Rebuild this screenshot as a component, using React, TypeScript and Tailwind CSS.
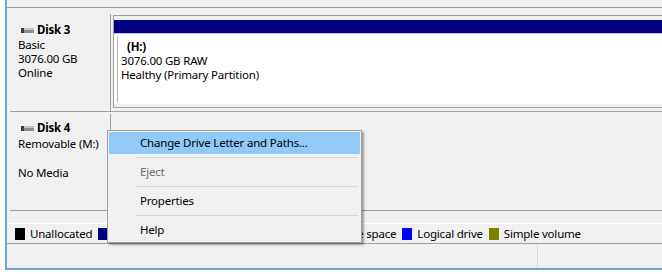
import React from "react";

function DiskIcon() {
  return (
    <svg width="13" height="5" viewBox="0 0 13 5" className="shrink-0">
      <rect x="0" y="0" width="13" height="5" fill="#8c8c8c" />
      <rect x="0" y="0" width="13" height="2" fill="#c4c4c4" />
      <rect x="0" y="0" width="3" height="5" fill="#3c3c3c" />
    </svg>
  );
}

const legend = [
  { label: "Unallocated", color: "bg-black" },
  { label: "Primary partition", color: "bg-[#000080]" },
  { label: "Extended partition", color: "bg-[#008000]" },
  { label: "Free space", color: "bg-[#80ff80]" },
  { label: "Logical drive", color: "bg-[#0000ff]" },
  { label: "Simple volume", color: "bg-[#808000]" },
];

function MenuSeparator() {
  return (
    <div className="h-[7px] flex items-center pl-[26px] pr-[2px]">
      <div className="h-px w-full bg-[#d7d7d7]" />
    </div>
  );
}

export default function App() {
  return (
    <div className="relative w-[662px] h-[274px] overflow-hidden bg-white text-[11.5px] leading-[14px] tracking-[-0.2px] text-black font-['Noto_Sans',sans-serif]">
      <div className="ml-[5px] w-[657px] h-[270px] border-l-2 border-b-2 border-[#6fa5d9] bg-[#f0f0f0] flex flex-col">
        {/* top pane edge */}
        <div className="h-[7px]" />
        <div className="h-px bg-[#a0a0a0]" />

        {/* disk list */}
        <div className="h-[215px] pl-[3px] pt-[6px] flex flex-col">
          {/* Disk 3 */}
          <div className="h-[98px] flex border-b border-[#a0a0a0]">
            <div className="w-[101px] border-r border-[#a0a0a0] pl-[8px] pt-[9px]">
              <div className="flex items-center gap-[3px] pl-[3px] font-bold">
                <DiskIcon />
                <span>Disk 3</span>
              </div>
              <div className="mt-px">Basic</div>
              <div>3076.00 GB</div>
              <div>Online</div>
            </div>
            <div className="ml-[2px] mt-px h-[93px] flex-1 flex flex-col border-t border-l border-b border-[#a0a0a0]">
              <div className="h-[4px]" />
              <div className="h-[13px] bg-[#000080]" />
              <div className="h-px bg-[#b8c0e0]" />
              <div className="h-[70px] bg-white pl-[3px] pt-[2px]">
                <div className="h-[66px] border-l border-[#b4b4b4] pl-[3px] pt-[4px]">
                  <div className="ml-[6px] font-bold">(H:)</div>
                  <div>3076.00 GB RAW</div>
                  <div>Healthy (Primary Partition)</div>
                </div>
              </div>
            </div>
          </div>

          {/* Disk 4 */}
          <div className="mt-[2px] h-[96px] flex">
            <div className="w-[101px] border-r border-[#a0a0a0] pl-[8px] pt-[7px]">
              <div className="flex items-center gap-[3px] pl-[3px] font-bold">
                <DiskIcon />
                <span>Disk 4</span>
              </div>
              <div className="mt-[2px]">Removable (M:)</div>
              <div className="mt-[15px]">No Media</div>
            </div>
            <div className="flex-1" />
          </div>

          <div className="h-px bg-[#a0a0a0]" />
        </div>

        {/* legend */}
        <div className="h-px bg-white" />
        <div className="h-[19px] flex items-center pl-[8px] gap-[6px]">
          {legend.map((item) => (
            <div key={item.label} className="flex items-center gap-[5px]">
              <div className={`w-[10px] h-[12px] ${item.color}`} />
              <span>{item.label}</span>
            </div>
          ))}
        </div>
        <div className="h-px bg-[#a0a0a0]" />

        {/* status bar */}
        <div className="h-[24px] flex">
          <div className="w-[531px] border-r border-[#d9d9d9]" />
          <div className="flex-1" />
        </div>
      </div>

      {/* context menu */}
      <div className="absolute left-[107px] top-[130px] w-[255px] h-[113px] bg-[#f0f0f0] border border-[#a0a0a0] p-px shadow-[2px_2px_2px_rgba(0,0,0,0.35)]">
        <div className="h-[22px] flex items-center pl-[31px] bg-[#91c9f7]">Change Drive Letter and Paths...</div>
        <MenuSeparator />
        <div className="h-[22px] flex items-center pl-[31px] text-[#6d6d6d]">Eject</div>
        <MenuSeparator />
        <div className="h-[22px] flex items-center pl-[31px]">Properties</div>
        <MenuSeparator />
        <div className="h-[22px] flex items-center pl-[31px]">Help</div>
      </div>
    </div>
  );
}
